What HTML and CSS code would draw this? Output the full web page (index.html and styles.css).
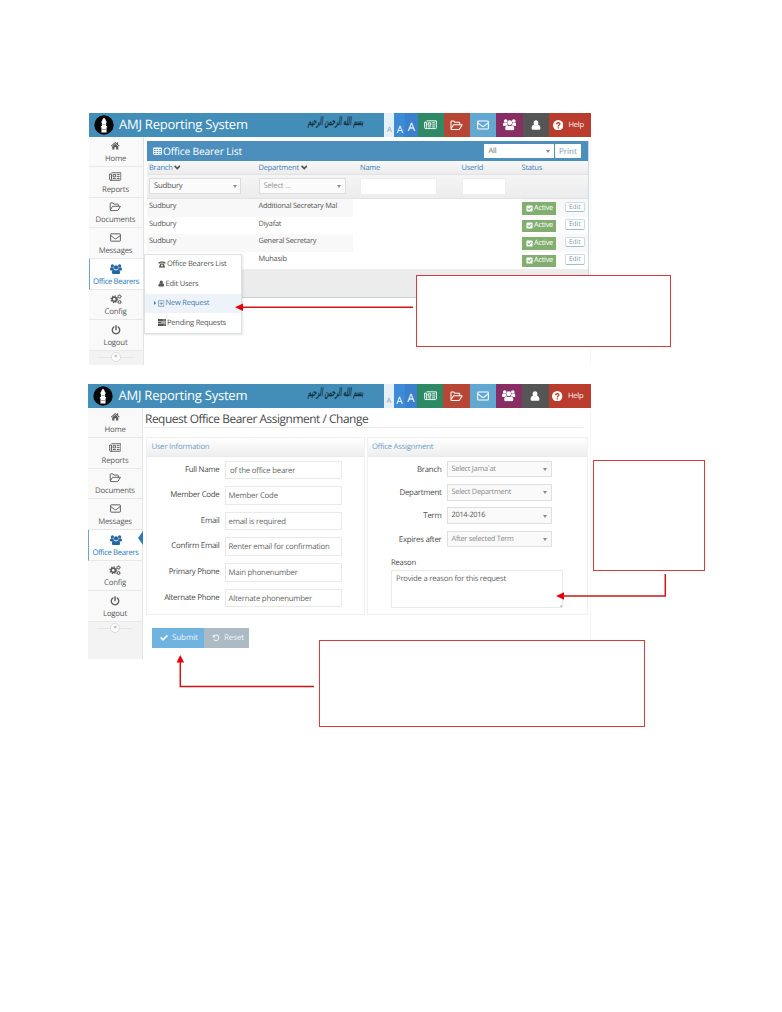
FILE: index.html
```html
<!DOCTYPE html>
<html lang="en">
<head>
<meta charset="utf-8">
<title>AMJ Reporting System</title>
<link rel="stylesheet" href="styles.css">
</head>
<body>
<svg class="defs" aria-hidden="true">
  <symbol id="home" viewBox="0 0 16 16"><path d="M8 1.6 0.6 8l1 1.1L8 3.6l6.4 5.5 1-1.1-2.6-2.3V2h-2v2z"/><path d="M8 4.8 2.9 9.2V14.4h3.7v-4h2.8v4h3.7V9.2z"/></symbol>
  <symbol id="news" viewBox="0 0 20 14"><path fill="none" stroke="currentColor" stroke-width="1.5" d="M4 1h15v10.5a1.5 1.5 0 0 1-1.5 1.5H2.5A1.5 1.5 0 0 1 1 11.500V3h3v8.500a1.500 1.500 0 0 1-1.500 1.500M6.500 4h4v3.600h-4zM6 10.300h5M12.500 4h4.500M12.500 7.200h4.500M12.500 10.300h4.500"/></symbol>
  <symbol id="folder" viewBox="0 0 20 16"><path fill="none" stroke="currentColor" stroke-width="1.6" stroke-linejoin="round" d="M1.500 12.500V2.500a1 1 0 0 1 1-1h3.500l1.500 2h6.500a1 1 0 0 1 1 1V7M1.500 13.500 5.500 7.200h13.200l-3.700 6.300a2 2 0 0 1-1.600 1H2.500a1 1 0 0 1-1-1z"/></symbol>
  <symbol id="mail" viewBox="0 0 18 14"><path fill="none" stroke="currentColor" stroke-width="1.600" d="M2 1h14a1 1 0 0 1 1 1v10a1 1 0 0 1-1 1H2a1 1 0 0 1-1-1V2a1 1 0 0 1 1-1zM1 3.500l6 4.800a3 3 0 0 0 4 0l6-4.800"/></symbol>
  <symbol id="users" viewBox="0 0 20 17"><circle cx="4" cy="3" r="2.700"/><circle cx="16" cy="3" r="2.700"/><circle cx="10" cy="5.500" r="3.600"/><path d="M0 8.500C0 6.500 1 5.500 2 5.300c1.500 1 3 .8 4 .3C6 7.500 6.500 8.300 7 9c-1.500 0-2.600.4-3.300 1.500H1.500C.5 10.500 0 9.700 0 8.500zM20 8.500c0-2-1-3-2-3.200-1.500 1-3 .8-4 .3 0 1.900-.5 2.700-1 3.400 1.500 0 2.600.4 3.300 1.500h2.200c1 0 1.500-.8 1.500-2zM3.300 14c0-3 1.300-4.900 3.200-4.900 2 1.700 5 1.700 7 0 1.900 0 3.200 1.900 3.200 4.900 0 1.800-1 2.800-2.500 2.800H5.800c-1.500 0-2.500-1-2.500-2.800z"/></symbol>
  <symbol id="user" viewBox="0 0 16 16"><ellipse cx="8" cy="4.700" rx="3.800" ry="4.300"/><path d="M1 13c0-3 1.500-5.400 4-5.400 1.800 1.700 4.200 1.700 6 0 2.500 0 4 2.400 4 5.400 0 1.500-1 2.500-2.500 2.500h-9C2 15.500 1 14.500 1 13z"/></symbol>
  <symbol id="cogs" viewBox="0 0 20 18"><circle cx="7" cy="9" r="3.700" fill="none" stroke="currentColor" stroke-width="2.800"/><circle cx="7" cy="9" r="5.700" fill="none" stroke="currentColor" stroke-width="2" stroke-dasharray="2.240 2.240"/><circle cx="16" cy="4.300" r="2.200" fill="none" stroke="currentColor" stroke-width="1.600"/><circle cx="16" cy="4.300" r="3.200" fill="none" stroke="currentColor" stroke-width="1.200" stroke-dasharray="1.260 1.250"/><circle cx="16" cy="13.700" r="2.200" fill="none" stroke="currentColor" stroke-width="1.600"/><circle cx="16" cy="13.700" r="3.200" fill="none" stroke="currentColor" stroke-width="1.200" stroke-dasharray="1.260 1.250"/></symbol>
  <symbol id="power" viewBox="0 0 16 16"><path fill="none" stroke="currentColor" stroke-width="2.200" stroke-linecap="round" d="M8 1.200v6.300M4.600 3.200a6 6 0 1 0 6.800 0"/></symbol>
  <symbol id="table" viewBox="0 0 16 14"><path fill="none" stroke="currentColor" stroke-width="1.600" d="M1 1.500h14v11.500H1zM1 2.500h14M1 6h14M1 9.500h14M5.700 2v11M10.300 2v11"/></symbol>
  <symbol id="chevron" viewBox="0 0 12 9"><path d="M0 2.500 2.200.500 6 4 9.800.500 12 2.500 6 8.500z"/></symbol>
  <symbol id="checkbox" viewBox="0 0 16 16"><path fill-rule="evenodd" d="M3 1h10a2 2 0 0 1 2 2v10a2 2 0 0 1-2 2H3a2 2 0 0 1-2-2V3a2 2 0 0 1 2-2zm4 11 6-6-1.500-1.500L7 9 4.500 6.500 3 8z"/></symbol>
  <symbol id="phone" viewBox="0 0 18 15"><path d="M1 5C0 1.500 4 .5 9 .5S18 1.500 17 5h-4V3.500H5V5zM5 5.500h8L16 14H2z"/><circle cx="9" cy="9.500" r="2.200" fill="#fff"/></symbol>
  <symbol id="plus" viewBox="0 0 14 14"><path fill="none" stroke="currentColor" stroke-width="1.300" d="M1 1h12v12H1zM7 3.500v7M3.500 7h7"/></symbol>
  <symbol id="tasks" viewBox="0 0 16 14"><path d="M0 0h16v4H0zM0 5h16v4H0zM0 10h16v4H0z"/><path fill="#fff" d="M9 1.300h6v1.300H9zM6 6.300h9v1.300H6zM11 11.300h4v1.300h-4z"/></symbol>
  <symbol id="check" viewBox="0 0 16 13"><path d="M0 7 2.500 4.500 6 8 13.500.500 16 3 6 13z"/></symbol>
  <symbol id="undo" viewBox="0 0 16 16"><path fill="none" stroke="currentColor" stroke-width="2.200" d="M3 4.500A6 6 0 1 1 3 11.500"/><path d="M1 1v6.500h6.500z"/></symbol>
  <symbol id="question" viewBox="0 0 16 16"><circle cx="8" cy="8" r="8" fill="#fff"/><path fill="none" stroke="#b93c2c" stroke-width="2" d="M5.500 6.300C5.500 3.400 10.600 3.500 10.500 6.200 10.400 7.800 8 7.800 8 9.800M8 11v2"/></symbol>
  <symbol id="minaret" viewBox="0 0 20 20"><circle cx="10" cy="10" r="9.700" fill="#080808"/><path fill="#fff" d="M10 2.500 11.800 5v1.300h.8v1.500h-.5V11h1v1.500h-.6V17.500H7.500V12.500h-.6V11h1V7.800h-.5V6.300h.8V5z"/><path stroke="#888" stroke-width=".7" d="M8.500 9.500h3M8 14.500h4"/></symbol>
</svg>

<main class="page">
  <section class="app app-list">
    <header class="topbar">
      <svg class="logo"><use href="#minaret"/></svg>
      <h1 class="brand">AMJ Reporting System</h1>
      <span class="bismillah" lang="ar" dir="rtl">بسم الله الرحمن الرحيم</span>
      <nav class="tools">
        <span class="size size-s">A</span><span class="size size-m">A</span><span class="size size-l">A</span>
        <span class="tool green"><svg class="i-news"><use href="#news"/></svg></span>
        <span class="tool red"><svg class="i-folder"><use href="#folder"/></svg></span>
        <span class="tool sky"><svg class="i-mail"><use href="#mail"/></svg></span>
        <span class="tool purple"><svg class="i-users"><use href="#users"/></svg></span>
        <span class="tool gray"><svg class="i-user"><use href="#user"/></svg></span>
        <span class="help"><svg class="i-q"><use href="#question"/></svg>Help</span>
      </nav>
    </header>
    <div class="body">
      <nav class="side">
        <a class="item"><svg class="s-home"><use href="#home"/></svg>Home</a>
        <a class="item"><svg class="s-news"><use href="#news"/></svg>Reports</a>
        <a class="item"><svg class="s-folder"><use href="#folder"/></svg>Documents</a>
        <a class="item"><svg class="s-mail"><use href="#mail"/></svg>Messages</a>
        <a class="item active"><svg class="s-users"><use href="#users"/></svg>Office Bearers</a>
        <a class="item"><svg class="s-cogs"><use href="#cogs"/></svg>Config</a>
        <a class="item"><svg class="s-power"><use href="#power"/></svg>Logout</a>
        <div class="collapse"><span class="knob">«</span></div>
      </nav>
      <div class="list">
        <div class="list-title"><svg class="i-table"><use href="#table"/></svg><h2 class="list-name">Office Bearer List</h2><span class="all">All<i class="caret"></i></span><span class="print">Print</span></div>
        <div class="row head"><span>Branch <svg class="i-chev"><use href="#chevron"/></svg></span><span>Department <svg class="i-chev"><use href="#chevron"/></svg></span><span>Name</span><span>UserId</span><span>Status</span></div>
        <div class="row filters"><span class="sel sel-branch">Sudbury<i class="caret"></i></span><span class="sel sel-dept">Select ...<i class="caret"></i></span><span class="box box-name"></span><span class="box box-id"></span></div>
        <div class="row data odd"><span>Sudbury</span><span>Additional Secretary Mal</span><span class="blank"></span><span class="badge"><svg class="i-cb"><use href="#checkbox"/></svg>Active</span><span class="edit">Edit</span></div>
        <div class="row data"><span>Sudbury</span><span>Diyafat</span><span class="blank"></span><span class="badge"><svg class="i-cb"><use href="#checkbox"/></svg>Active</span><span class="edit">Edit</span></div>
        <div class="row data odd"><span>Sudbury</span><span>General Secretary</span><span class="blank"></span><span class="badge"><svg class="i-cb"><use href="#checkbox"/></svg>Active</span><span class="edit">Edit</span></div>
        <div class="row data"><span></span><span>Muhasib</span><span class="blank"></span><span class="badge"><svg class="i-cb"><use href="#checkbox"/></svg>Active</span><span class="edit">Edit</span></div>
        <div class="list-foot"></div>
      </div>
    </div>
    <div class="menu">
      <a class="entry"><svg class="i-m"><use href="#phone"/></svg>Office Bearers List</a>
      <a class="entry"><svg class="i-m thin"><use href="#user"/></svg>Edit Users</a>
      <a class="entry on"><i class="tri"></i><svg class="i-m thin"><use href="#plus"/></svg>New Request</a>
      <a class="entry"><svg class="i-m"><use href="#tasks"/></svg>Pending Requests</a>
    </div>
  </section>

  <section class="app app-form">
    <header class="topbar">
      <svg class="logo"><use href="#minaret"/></svg>
      <h1 class="brand">AMJ Reporting System</h1>
      <span class="bismillah" lang="ar" dir="rtl">بسم الله الرحمن الرحيم</span>
      <nav class="tools">
        <span class="size size-s">A</span><span class="size size-m">A</span><span class="size size-l">A</span>
        <span class="tool green"><svg class="i-news"><use href="#news"/></svg></span>
        <span class="tool red"><svg class="i-folder"><use href="#folder"/></svg></span>
        <span class="tool sky"><svg class="i-mail"><use href="#mail"/></svg></span>
        <span class="tool purple"><svg class="i-users"><use href="#users"/></svg></span>
        <span class="tool gray"><svg class="i-user"><use href="#user"/></svg></span>
        <span class="help"><svg class="i-q"><use href="#question"/></svg>Help</span>
      </nav>
    </header>
    <div class="body">
      <nav class="side">
        <a class="item"><svg class="s-home"><use href="#home"/></svg>Home</a>
        <a class="item"><svg class="s-news"><use href="#news"/></svg>Reports</a>
        <a class="item"><svg class="s-folder"><use href="#folder"/></svg>Documents</a>
        <a class="item"><svg class="s-mail"><use href="#mail"/></svg>Messages</a>
        <a class="item active pointed"><svg class="s-users"><use href="#users"/></svg>Office Bearers</a>
        <a class="item"><svg class="s-cogs"><use href="#cogs"/></svg>Config</a>
        <a class="item"><svg class="s-power"><use href="#power"/></svg>Logout</a>
        <div class="collapse"><span class="knob">«</span></div>
      </nav>
      <div class="form">
        <h2 class="form-title">Request Office Bearer Assignment / Change</h2>
        <div class="panels">
          <div class="panel user-panel">
            <h3 class="panel-title">User Information</h3>
            <div class="fields">
              <label>Full Name</label><span class="input first">of the office bearer</span>
              <label>Member Code</label><span class="input">Member Code</span>
              <label>Email</label><span class="input">email is required</span>
              <label>Confirm Email</label><span class="input">Renter email for confirmation</span>
              <label>Primary Phone</label><span class="input">Main phonenumber</span>
              <label>Alternate Phone</label><span class="input">Alternate phonenumber</span>
            </div>
          </div>
          <div class="panel office-panel">
            <h3 class="panel-title">Office Assignment</h3>
            <div class="selects">
              <label>Branch</label><span class="pick">Select Jama`at<i class="caret"></i></span>
              <label>Department</label><span class="pick">Select Department<i class="caret"></i></span>
              <label>Term</label><span class="pick dark">2014-2016<i class="caret"></i></span>
              <label>Expires after</label><span class="pick">After selected Term<i class="caret"></i></span>
            </div>
            <div class="reason"><label>Reason</label><div class="area">Provide a reason for this request</div></div>
          </div>
        </div>
        <div class="actions"><span class="btn submit"><svg class="i-b"><use href="#check"/></svg>Submit</span><span class="btn reset"><svg class="i-b"><use href="#undo"/></svg>Reset</span></div>
      </div>
    </div>
  </section>

  <div class="note note-menu"></div>
  <div class="note note-reason"></div>
  <div class="note note-submit"></div>
  <svg class="arrows" viewBox="0 0 782 1012">
    <path class="wire" d="M413 307.300H241M665.300 574v22H562M314 686.500H180.300V661"/>
    <path class="tip" d="M235 307.300l8-3.700v7.400zM556 596l8-3.700v7.400zM180.300 655l-3.800 7.500h7.600z"/>
  </svg>
</main>
</body>
</html>
```
FILE: styles.css
```css
* { box-sizing: border-box; }
body { margin: 0; background: #fff; font-family: "Open Sans", "Noto Sans", sans-serif; font-size: 7.400px; letter-spacing: -.22px; color: #555; text-rendering: geometricPrecision; }
h1, h2, h3 { margin: 0; font-weight: 400; }
svg { display: block; flex: none; fill: currentColor; }
.defs { position: absolute; width: 0; height: 0; }
.page { position: relative; width: 782px; height: 1012px; padding: 113px 0 0 88.500px; overflow: hidden; white-space: nowrap; }
.app { position: relative; width: 502.500px; border-right: 1px solid #f6f6f6; }
.app-list { height: 251.500px; }
.app-form { height: 275.500px; margin: 19.500px 0 0 -.5px; }

.topbar { display: flex; align-items: center; height: 23.700px; width: 502.500px; background: #438eb9; color: #fff; }
.logo { width: 20px; height: 20px; margin-left: 5px; }
.brand { width: 188px; margin-left: 5.500px; font-size: 13px; letter-spacing: -.23px; line-height: 23px; }
.bismillah { display: flex; justify-content: center; width: 57px; margin-top: -5px; font-family: "DejaVu Sans", sans-serif; font-size: 7px; font-weight: 700; font-style: italic; letter-spacing: 0; line-height: 16px; color: #15303f; transform: scale(.78, 1.6); }
.tools { display: flex; align-self: stretch; margin-left: auto; }
.size { display: flex; align-items: flex-end; justify-content: center; line-height: 1; }
.size-s { width: 10px; background: #e6f0f8; color: #8d979f; font-size: 7.500px; padding-bottom: 2px; }
.size-m { width: 11px; background: #3d8ad6; font-size: 10px; padding-bottom: 3px; }
.size-l { width: 12.300px; background: #3a80cc; font-size: 11.500px; padding-bottom: 3px; }
.tool { display: flex; width: 26.300px; align-items: center; justify-content: center; }
.green { background: #2e8965; } .red { background: #b74635; } .sky { background: #62a8d1; } .purple { background: #892e65; } .gray { background: #555; }
.i-news { width: 13px; height: 9.500px; } .i-folder { width: 13px; height: 10.500px; } .i-mail { width: 12px; height: 10px; } .i-users { width: 13.500px; height: 11.500px; } .i-user { width: 10px; height: 10px; }
.help { display: flex; align-items: center; width: 42px; padding-left: 3.500px; gap: 5.500px; background: #b93c2c; font-size: 7.500px; }
.i-q { width: 10.500px; height: 10.500px; }

.body { display: flex; }
.side { width: 55px; height: 228px; background: #f3f3f3; border-right: 1px solid #e2e5e7; }
.app-form .side { height: 251.800px; }
.item { position: relative; display: flex; flex-direction: column; align-items: center; justify-content: space-between; height: 30.600px; padding: 4.500px 0 2px; background: #f9f9f9; border-bottom: 1px solid #e8e8e8; font-size: 7.800px; line-height: 10px; color: #5c5c5c; }
.active { background: #fff; color: #2b7dbc; border-left: 1px solid #6aa3cd; letter-spacing: -.4px; }
.active svg { color: #2468a3; }
.pointed::after { content: ""; position: absolute; right: -1px; top: 1px; border-right: 5px solid #2b7dbc; border-top: 7px solid transparent; border-bottom: 7px solid transparent; }
.s-home { width: 10.500px; height: 9.500px; } .s-news { width: 12.500px; height: 9px; } .s-folder { width: 12.500px; height: 9.500px; } .s-mail { width: 11px; height: 9px; } .s-users { width: 12px; height: 10.500px; } .s-cogs { width: 12px; height: 10.500px; } .s-power { width: 10px; height: 10px; }
.collapse { display: flex; justify-content: center; height: 12px; background: linear-gradient(#e6e6e6, #e6e6e6) center 6px / 36px 1px no-repeat; }
.knob { width: 10px; height: 10px; margin-top: 1px; border: 1px solid #ddd; border-radius: 50%; background: #fff; color: #999; font-size: 7px; line-height: 7px; text-align: center; }

.list { width: 442.500px; height: 156.700px; margin: 4.300px 0 0 3px; border-right: 1px solid #c8dbe6; }
.list-title { display: flex; align-items: center; height: 20.200px; padding-left: 6px; background: #4c8fbd; color: #fff; }
.i-table { width: 9px; height: 8px; margin-right: 1.500px; }
.list-name { width: 321px; font-size: 10.200px; letter-spacing: -.15px; }
.all { position: relative; width: 69.700px; height: 14.500px; padding-left: 4.500px; background: #fff; color: #666; font-size: 7.500px; line-height: 15px; }
.print { width: 26.500px; height: 14.500px; margin-left: 1px; border-radius: 1px; background: #fff; color: #8298a8; font-size: 8px; letter-spacing: 0; line-height: 15px; text-align: center; }
.caret { position: absolute; right: 3.500px; top: calc(50% - 1px); border-top: 3px solid #888; border-left: 2px solid transparent; border-right: 2px solid transparent; }
.row { display: grid; grid-template-columns: 109.500px 101.500px 101.500px 60px 1fr; padding-left: 2.500px; }
.head { height: 14px; line-height: 15px; background: linear-gradient(#f8f8f8, #ececec); color: #3a80b4; border-bottom: 1px solid #e2e2e2; font-size: 7.500px; }
.head svg { display: inline-block; width: 6.500px; height: 5px; color: #555; vertical-align: .5px; }
.filters { height: 24px; padding-top: 3px; background: linear-gradient(#f5f5f5, #ececec); border-bottom: 1px solid #e2e2e2; }
.sel { position: relative; height: 16px; padding-left: 4px; border: 1px solid #dcdcdc; background: #fbfbfb; font-size: 7.700px; line-height: 14px; }
.sel-branch { width: 92px; }
.sel-dept { width: 87px; color: #999; }
.box { height: 17px; background: #fff; border: 1px solid #eee; }
.box-name { width: 77px; } .box-id { width: 44px; }
.data { grid-template-columns: 109.500px 94px 169px 43px 21px; height: 17.500px; line-height: 15px; }
.odd { background: #f8f8f8; }
.blank { background: #fff; height: 17.500px; }
.badge { display: flex; align-items: center; gap: 1.500px; width: 34.500px; height: 12.500px; margin-top: 3px; padding-left: 4px; background: #82af6f; color: #fff; font-size: 7.300px; }
.i-cb { width: 7px; height: 7px; }
.edit { width: 20.500px; height: 10.500px; margin-top: 2.500px; border: 1px solid #cfdbe4; border-bottom-color: #a5bccb; border-radius: 2px; background: #fff; color: #8297a6; font-size: 6.600px; letter-spacing: 0; line-height: 8px; text-align: center; }
.list-foot { height: 29px; background: #ececec; border-bottom: 1px solid #c4d0d6; }

.menu { position: absolute; left: 55px; top: 140.500px; width: 98px; height: 80px; background: #fff; border: 1px solid #dde1e3; box-shadow: 1px 1px 2px rgba(0,0,0,.1); }
.entry { position: relative; display: flex; align-items: center; gap: 1px; height: 19.500px; padding-left: 13.500px; font-size: 7.500px; color: #555; }
.on { background: #edf3f8; color: #3f7dac; }
.tri { position: absolute; left: 9px; border-left: 2.500px solid #3c77a4; border-top: 2px solid transparent; border-bottom: 2px solid transparent; }
.i-m { width: 8px; height: 7px; } .thin { width: 6.500px; }

.form { width: 445px; padding-left: 2px; }
.form-title { width: 438px; height: 20.500px; border-bottom: 1px solid #ececec; font-size: 11.900px; letter-spacing: -.45px; line-height: 22px; color: #484848; }
.panels { display: flex; gap: 2px; margin-top: 9px; }
.panel { height: 178px; border: 1px solid #f0f0f0; }
.user-panel { width: 219px; margin-left: 1px; } .office-panel { width: 222px; }
.panel-title { height: 19px; padding-left: 4.500px; background: linear-gradient(#fff, #eee); border-bottom: 1px solid #eaeaea; font-size: 7.700px; line-height: 18.500px; color: #6fa1c7; }
.fields { display: grid; grid-template-columns: 72.500px 117px; grid-auto-rows: 18.600px; column-gap: 5.500px; row-gap: 7px; padding-top: 3.500px; color: #4c4c4c; font-size: 7.900px; }
.fields label, .selects label { text-align: right; line-height: 18px; letter-spacing: -.28px; }
.input { padding-left: 2.500px; border: 1px solid #e9e9e9; font-size: 7.800px; line-height: 18.500px; color: #666; }
.first { padding-left: 4px; }
.selects { display: grid; grid-template-columns: 74px 105px; grid-auto-rows: 16.500px; column-gap: 5px; row-gap: 6.900px; padding-top: 3.500px; color: #4c4c4c; font-size: 7.900px; }
.pick { position: relative; padding-left: 4px; border: 1px solid #dfdfdf; background: #f9f9f9; font-size: 7.400px; letter-spacing: -.28px; line-height: 14.500px; color: #8c8c8c; }
.dark { color: #555; }
.reason { margin: 10px 0 0 23.500px; color: #4c4c4c; line-height: 12px; font-size: 7.700px; }
.area { width: 172px; height: 38px; margin-top: .5px; padding: 2.500px 4px; border: 1px solid #e9e9e9; font-size: 7.700px; color: #666; background: linear-gradient(135deg, transparent 50%, #bbb 50%) right bottom / 3px 3px no-repeat; }
.reason label { display: block; }
.actions { display: flex; margin: 12.500px 0 0 6.500px; }
.btn { display: flex; align-items: center; height: 20px; padding-left: 8px; gap: 4.500px; color: #eef6fb; font-size: 8px; letter-spacing: -.1px; }
.submit { width: 52px; background: #6fb3e0; } .reset { width: 45.500px; background: #abbac3; }
.i-b { width: 8px; height: 7.500px; }

.note { position: absolute; border: 1.500px solid #d93a3c; background: #fff; }
.note-menu { left: 415.500px; top: 274.500px; width: 255.500px; height: 72.500px; }
.note-reason { left: 593px; top: 460px; width: 112px; height: 110.500px; }
.note-submit { left: 319px; top: 639.500px; width: 325.500px; height: 87.500px; }
.arrows { position: absolute; left: 0; top: 0; width: 782px; height: 1012px; }
.wire { fill: none; stroke: #cf1518; stroke-width: 1.500; }
.tip { fill: #e80008; }
```
